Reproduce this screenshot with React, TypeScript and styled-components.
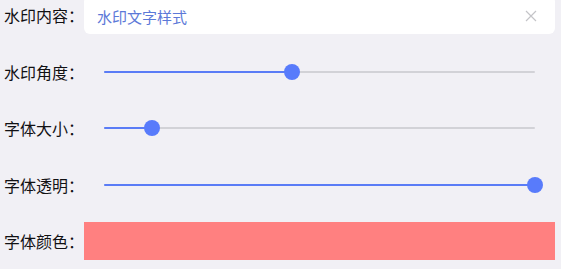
import styled, { createGlobalStyle } from "styled-components";

const GlobalStyle = createGlobalStyle`
  body {
    margin: 0;
    background: #f1f0f5;
    font-family: "Noto Sans CJK SC", "Noto Sans", sans-serif;
    overflow: hidden;
  }
`;

const Panel = styled.div`
  display: flex;
  flex-direction: column;
  gap: 18.5px;
  margin-top: -4px;
  padding: 0 6px 0 4px;
`;

const Row = styled.div`
  display: flex;
  align-items: center;
  height: 38px;
`;

const Label = styled.div`
  width: 80px;
  flex-shrink: 0;
  font-size: 16px;
  color: #111114;
  white-space: nowrap;
`;

const InputBox = styled.div`
  flex: 1;
  height: 100%;
  display: flex;
  align-items: center;
  justify-content: space-between;
  background: #fff;
  border-radius: 6px;
  padding: 2px 18px 0 13px;
  box-sizing: border-box;
`;

const InputText = styled.span`
  font-size: 15px;
  color: #5c79d8;
`;

const ClearButton = styled.span`
  display: flex;
  align-items: center;
`;

const SliderBox = styled.div`
  flex: 1;
  height: 100%;
  padding: 0 20px 0 20px;
  display: flex;
  align-items: center;
`;

const Track = styled.div`
  position: relative;
  width: 100%;
  height: 2px;
  background: #d2d2d7;
  border-radius: 1px;
`;

const Fill = styled.div`
  height: 100%;
  background: #5a7cf6;
  border-radius: 1px;
`;

const Thumb = styled.div`
  position: absolute;
  top: 50%;
  width: 16px;
  height: 16px;
  border-radius: 50%;
  background: #587bfb;
  transform: translate(-50%, -50%);
`;

const Swatch = styled.div<{ $color: string }>`
  flex: 1;
  height: 100%;
  background: ${(p) => p.$color};
`;

function Slider({ value }: { value: number }) {
  return (
    <SliderBox>
      <Track>
        <Fill style={{ width: `${value}%` }} />
        <Thumb style={{ left: `${value}%` }} />
      </Track>
    </SliderBox>
  );
}

const sliders = [
  { label: "水印角度：", value: 43.7 },
  { label: "字体大小：", value: 11.1 },
  { label: "字体透明：", value: 100 },
];

export default function App() {
  return (
    <>
      <GlobalStyle />
      <Panel>
        <Row>
          <Label>水印内容：</Label>
          <InputBox>
            <InputText>水印文字样式</InputText>
            <ClearButton>
              <svg width="12" height="12" viewBox="0 0 12 12">
                <path d="M1 1L11 11M11 1L1 11" stroke="#c4c4c8" strokeWidth="1.2" fill="none" />
              </svg>
            </ClearButton>
          </InputBox>
        </Row>
        {sliders.map((s) => (
          <Row key={s.label}>
            <Label>{s.label}</Label>
            <Slider value={s.value} />
          </Row>
        ))}
        <Row>
          <Label>字体颜色：</Label>
          <Swatch $color="#ff8080" />
        </Row>
      </Panel>
    </>
  );
}
